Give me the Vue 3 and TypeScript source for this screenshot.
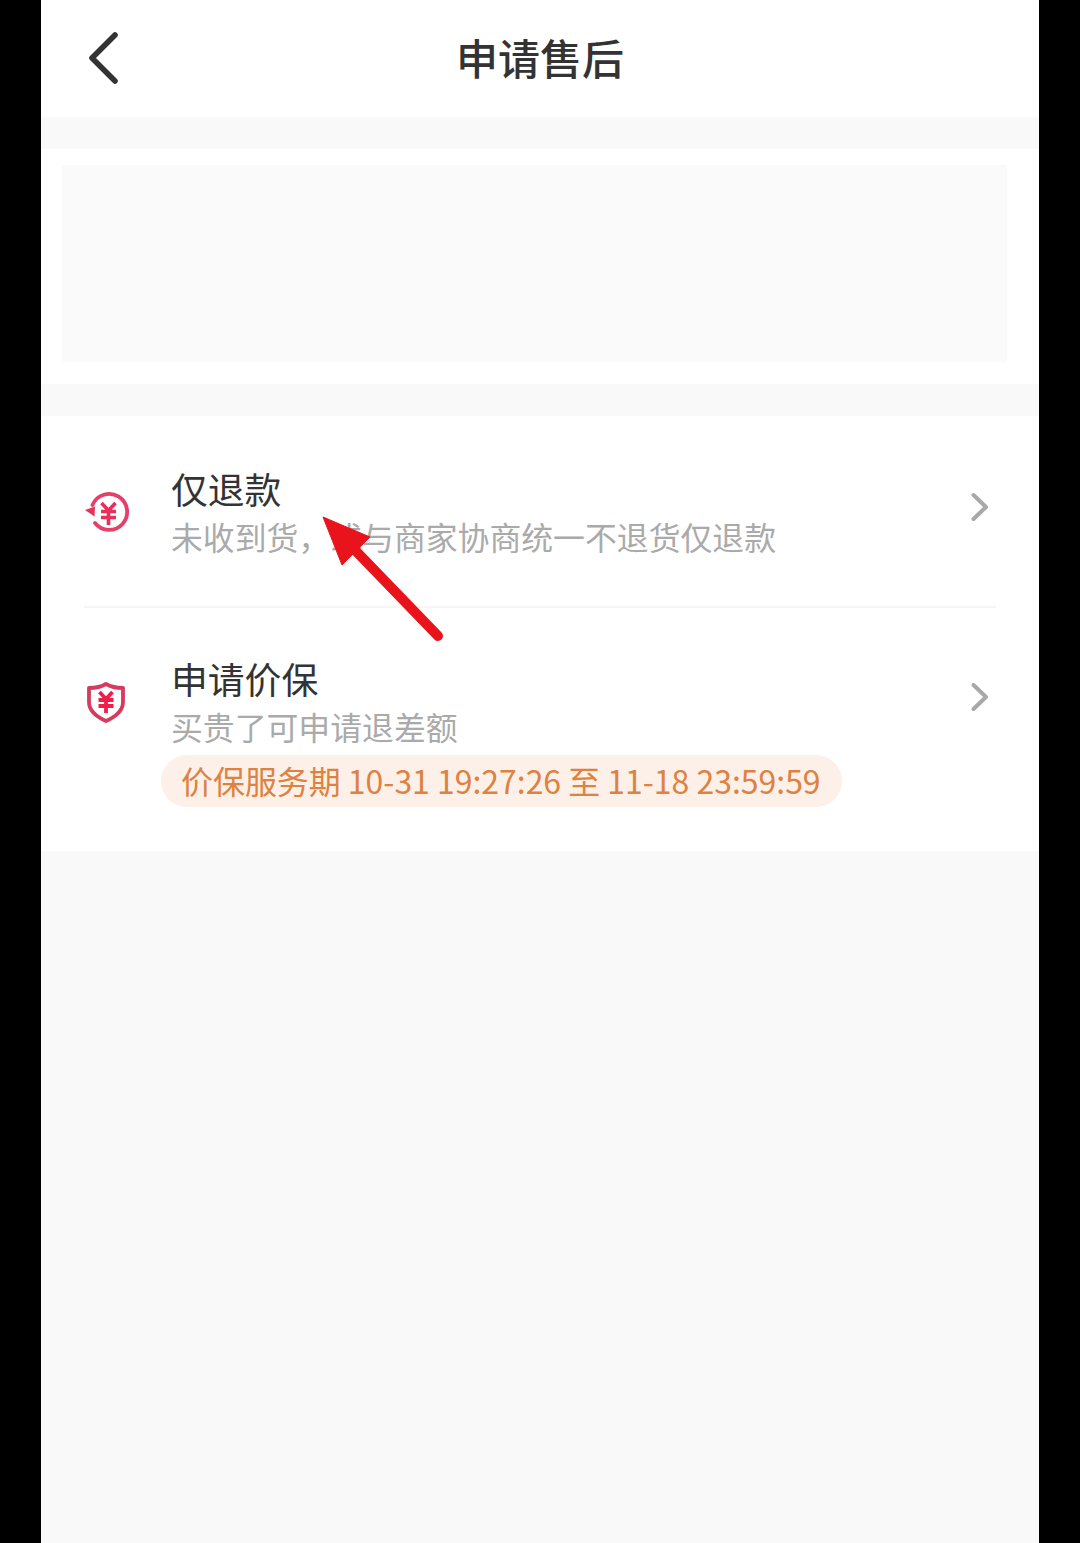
<script setup lang="ts">
interface Row { title: string; sub: string; pill?: string; kind: 'refund' | 'shield' }
const rows: Row[] = [
  { title: '仅退款', sub: '未收到货，或与商家协商统一不退货仅退款', kind: 'refund' },
  { title: '申请价保', sub: '买贵了可申请退差额', pill: '价保服务期 10-31 19:27:26 至 11-18 23:59:59', kind: 'shield' },
]
</script>

<template>
  <div class="screen">
    <div class="phone">
      <header class="bar">
        <svg class="back" viewBox="0 0 36 56" width="36" height="56">
          <path d="M29 5 L6 28 L29 51" fill="none" stroke="#333" stroke-width="5.6" stroke-linecap="round" stroke-linejoin="round" />
        </svg>
        <h1 class="title">申请售后</h1>
      </header>

      <section class="goods">
        <div class="placeholder"></div>
      </section>

      <section class="list">
        <div v-for="r in rows" :key="r.kind" class="row" :class="r.kind">
          <div class="icon">
            <svg v-if="r.kind === 'refund'" viewBox="0 0 46 46" width="46" height="46">
              <path d="M8.5 15 A18 18 0 1 1 11 33" fill="none" stroke="#e5406a" stroke-width="3.8" stroke-linecap="round" />
              <path d="M1 20 L11 16.500 L10.500 26.500 Z" fill="#e5335a" />
              <path d="M17.500 13 L24.500 20.500 L31.500 13 M24.500 20.500 V35 M17 21.500 H32 M17 27.500 H32" fill="none" stroke="#e8305a" stroke-width="3.600" />
            </svg>
            <svg v-else viewBox="0 0 42 42" width="42" height="42">
              <path d="M21 3 C26 6 31 7 38 7 V21 C38 30 30 36 21 40 C12 36 4 30 4 21 V7 C11 7 16 6 21 3 Z" fill="#fff" stroke="#d63a5e" stroke-width="3.800" stroke-linejoin="round" />
              <path d="M14.500 11 L21 18 L27.500 11 M21 18 V32 M13.500 19 H28.500 M13.500 25 H28.500" fill="none" stroke="#ef1f4a" stroke-width="3.800" />
            </svg>
          </div>
          <div class="body">
            <div class="row-title">{{ r.title }}</div>
            <div class="row-sub">{{ r.sub }}</div>
            <div v-if="r.pill" class="pill">{{ r.pill }}</div>
          </div>
          <svg class="chev" viewBox="0 0 20 30" width="20" height="30">
            <path d="M3.500 3 L16 15 L3.500 27" fill="none" stroke="#a8a8a8" stroke-width="4" stroke-linecap="round" stroke-linejoin="round" />
          </svg>
        </div>
      </section>

      <svg class="arrow" viewBox="0 0 130 135" width="130" height="135">
        <path d="M1 3 L48 23 L20 51 Z" fill="#e9141b" stroke="#e9141b" stroke-width="1" stroke-linejoin="round" />
        <path d="M31 34 L116 122" fill="none" stroke="#e9141b" stroke-width="10" stroke-linecap="round" />
      </svg>
    </div>
  </div>
</template>

<style>
html, body { margin: 0; background: #000; }
</style>

<style scoped>
.screen {
  width: 1080px;
  height: 1543px;
  background: #000;
  display: flex;
  justify-content: center;
  overflow: hidden;
  font-family: "Noto Sans CJK SC", "Noto Sans", sans-serif;
}
.phone {
  position: relative;
  width: 998px;
  background: #f9f9f9;
  display: flex;
  flex-direction: column;
}
.bar {
  position: relative;
  height: 117px;
  box-sizing: border-box;
  padding-bottom: 4px;
  background: #fff;
  display: flex;
  align-items: center;
  justify-content: center;
}
.back { position: absolute; left: 45px; top: 30px; }
.title {
  margin: 0;
  font-size: 42px;
  font-weight: 500;
  color: #333;
  line-height: 1;
}
.goods {
  margin-top: 32px;
  height: 235px;
  background: #fff;
  box-sizing: border-box;
  padding: 16px 32px 22px 21px;
}
.placeholder { height: 197px; background: #fafafa; }
.list {
  margin-top: 32px;
  height: 435px;
  background: #fff;
  box-sizing: border-box;
  padding: 0 43px;
}
.row {
  position: relative;
  display: flex;
  align-items: flex-start;
}
.row.refund { height: 192px; border-bottom: 2px solid #f6f6f6; box-sizing: border-box; }
.icon {
  position: absolute;
  display: flex;
}
.refund .icon { left: 0; top: 74px; }
.shield .icon { left: 1px; top: 73px; }
.body { position: absolute; }
.refund .body { left: 87px; top: 48px; }
.shield .body { top: 46px; left: 87px; }
.row-title {
  font-size: 36.8px;
  line-height: 48px;
  color: #333;
}
.row-sub {
  margin-top: 1px;
  font-size: 31.85px;
  line-height: 46px;
  color: #aaa;
  white-space: nowrap;
}
.pill {
  margin: 6px 0 0 -10px;
  width: 681px;
  height: 52px;
  box-sizing: border-box;
  padding-left: 20px;
  border-radius: 26px;
  background: #fdf0e8;
  color: #dd8240;
  font-size: 31.95px;
  line-height: 50px;
  white-space: nowrap;
}
.chev { position: absolute; left: 886px; }
.refund .chev { top: 76px; }
.shield .chev { top: 74px; }
.arrow { position: absolute; left: 281px; top: 514px; }
</style>
